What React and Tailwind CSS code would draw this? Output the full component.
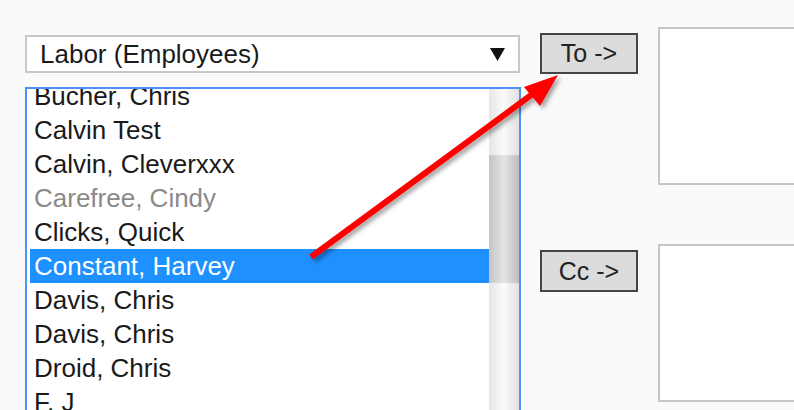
import React from "react";

const people = [
  { name: "Bucher, Chris" },
  { name: "Calvin Test" },
  { name: "Calvin, Cleverxxx" },
  { name: "Carefree, Cindy", inactive: true },
  { name: "Clicks, Quick" },
  { name: "Constant, Harvey", selected: true },
  { name: "Davis, Chris" },
  { name: "Davis, Chris" },
  { name: "Droid, Chris" },
  { name: "F, J" },
  { name: "Gold, Amy" },
];

function Option({ name, selected, inactive }) {
  let tone = "text-[#1a1a1a]";
  if (selected) tone = "bg-[#1e90ff] text-white";
  else if (inactive) tone = "text-[#8a8a8a]";
  return (
    <div className={`h-[34px] pl-[4px] leading-[34px] whitespace-nowrap ${tone}`}>
      {name}
    </div>
  );
}

function Pointer() {
  return (
    <svg className="pointer-events-none absolute left-0 top-0" width="794" height="410">
      <defs>
        <filter id="shade" x="-20%" y="-20%" width="140%" height="140%">
          <feDropShadow dx="3" dy="3" stdDeviation="2" floodColor="#000" floodOpacity="0.35" />
        </filter>
      </defs>
      <g filter="url(#shade)">
        <line x1="311" y1="257" x2="538" y2="90" stroke="#ff0000" strokeWidth="6" />
        <polygon points="558,75 524,87 540,106" fill="#ff0000" />
      </g>
    </svg>
  );
}

export default function App() {
  return (
    <div
      className="relative h-[410px] w-[794px] overflow-hidden bg-[#fafafa] text-[26px]"
      style={{ fontFamily: '"Liberation Sans", Arial, sans-serif' }}
    >
      <div className="flex items-start pl-[25px] pt-[27px]">
        <div className="w-[496px] pt-[8px]">
          <div className="flex h-[38px] w-[495px] items-center justify-between border-2 border-[#c8c8c8] bg-white pl-[13px] pr-[13px] text-[#1a1a1a]">
            <span className="leading-none">Labor (Employees)</span>
            <svg width="15" height="13" viewBox="0 0 15 13">
              <polygon points="0,0 15,0 7.5,13" fill="#111" />
            </svg>
          </div>
          <div className="mt-[14px] flex h-[340px] border-2 border-[#4d90f7] bg-white pl-[3px]">
            <div className="flex-1 overflow-hidden">
              <div className="-mt-[10px]">
                {people.map((p, i) => (
                  <Option key={i} {...p} />
                ))}
              </div>
            </div>
            <div className="flex w-[30px] flex-col bg-gradient-to-r from-[#e6e6e6] via-[#fbfbfb] to-[#e0e0e0]">
              <div className="h-[66px]" />
              <div className="h-[128px] bg-gradient-to-r from-[#c4c4c4] via-[#e4e4e4] to-[#bdbdbd]" />
            </div>
          </div>
        </div>

        <div className="ml-[19px] flex w-[98px] flex-col">
          <button className="mt-[6px] h-[41px] border-2 border-[#454545] bg-[#dcdcdc] text-[25px] leading-none text-[#222]">
            To -&gt;
          </button>
          <button className="mt-[176px] h-[42px] border-2 border-[#454545] bg-[#dcdcdc] text-[25px] leading-none text-[#222]">
            Cc -&gt;
          </button>
        </div>

        <div className="ml-[20px] flex flex-1 flex-col">
          <div className="h-[158px] border-2 border-r-0 border-[#c6c6c6] bg-white" />
          <div className="mt-[59px] h-[158px] border-2 border-r-0 border-[#c6c6c6] bg-white" />
        </div>
      </div>
      <Pointer />
    </div>
  );
}
